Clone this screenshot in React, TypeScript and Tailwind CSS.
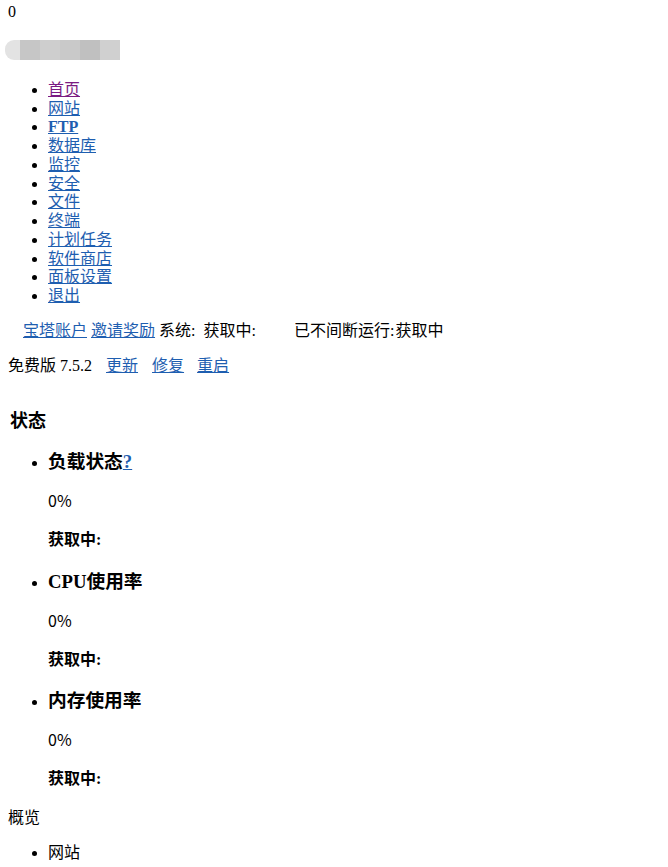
import React from "react";

const LINK = "text-[#1e5eb0] underline decoration-[#1e5eb0]";

function Nav() {
  const items = ["网站", "FTP", "数据库", "监控", "安全", "文件", "终端", "计划任务", "软件商店", "面板设置", "退出"];
  return (
    <ul className="mt-[21px] ml-[8px] list-disc pl-[40px] leading-[18.73px]">
      <li>
        <a className="text-[#7b1b82] underline decoration-[#7b1b82]" href="#">首页</a>
      </li>
      {items.map((t) => (
        <li key={t}>
          <a className={t === "FTP" ? LINK + " font-bold" : LINK} href="#">
            {t}
          </a>
        </li>
      ))}
    </ul>
  );
}

function StatusItem({ title, mt }: { title: React.ReactNode; mt: string }) {
  return (
    <li className={mt}>
      <div className="text-[18.72px] font-bold leading-[22px]">{title}</div>
      <div className="mt-[18px] leading-[18px] font-['Noto_Sans_CJK_SC',sans-serif]">0%</div>
      <div className="mt-[22px] leading-[18px] font-bold">获取中:</div>
    </li>
  );
}

export default function App() {
  return (
    <div className="min-h-[867px] bg-white pt-[3px] text-[16px] text-black font-['Liberation_Serif','Noto_Sans_CJK_SC',serif]">
      <div className="ml-[8px] leading-[18px]">0</div>

      <div className="ml-[5px] mt-[19px] flex h-[20px] w-[115px] blur-[0.6px]">
        <div className="h-full w-[15px] rounded-l-[9px] bg-[#e3e3e3]" />
        <div className="h-full w-[20px] bg-[#c6c6c6]" />
        <div className="h-full w-[20px] bg-[#cecece]" />
        <div className="h-full w-[20px] bg-[#c9c9c9]" />
        <div className="h-full w-[20px] bg-[#c0c0c0]" />
        <div className="h-full w-[20px] bg-[#d0d0d0]" />
      </div>

      <Nav />

      <div className="mt-[15px] ml-[23px] flex leading-[19px] whitespace-nowrap">
        <a className={LINK} href="#">宝塔账户</a>
        <a className={LINK + " ml-[4px]"} href="#">邀请奖励</a>
        <span className="ml-[4px]">系统:</span>
        <span className="ml-[8px]">获取中:</span>
        <span className="ml-[38px]">已不间断运行:</span>
        <span className="ml-[1px]">获取中</span>
      </div>

      <div className="mt-[16px] ml-[8px] flex leading-[19px] whitespace-nowrap">
        <span>免费版</span>
        <span className="ml-[4px]">7.5.2</span>
        <a className={LINK + " ml-[14px]"} href="#">更新</a>
        <a className={LINK + " ml-[14px]"} href="#">修复</a>
        <a className={LINK + " ml-[13px]"} href="#">重启</a>
      </div>

      <div className="mt-[35px] ml-[10px] text-[18px] font-bold leading-[22px]">状态</div>

      <ul className="ml-[8px] list-disc pl-[40px]">
        <StatusItem
          mt="mt-[19px]"
          title={
            <>
              负载状态
              <a className={LINK} href="#">?</a>
            </>
          }
        />
        <StatusItem mt="mt-[22px]" title="CPU使用率" />
        <StatusItem mt="mt-[21px]" title="内存使用率" />
      </ul>

      <div className="mt-[21px] ml-[8px] leading-[18px]">概览</div>

      <ul className="mt-[17px] ml-[8px] list-disc pl-[40px] leading-[18.73px]">
        <li>网站</li>
      </ul>
    </div>
  );
}
